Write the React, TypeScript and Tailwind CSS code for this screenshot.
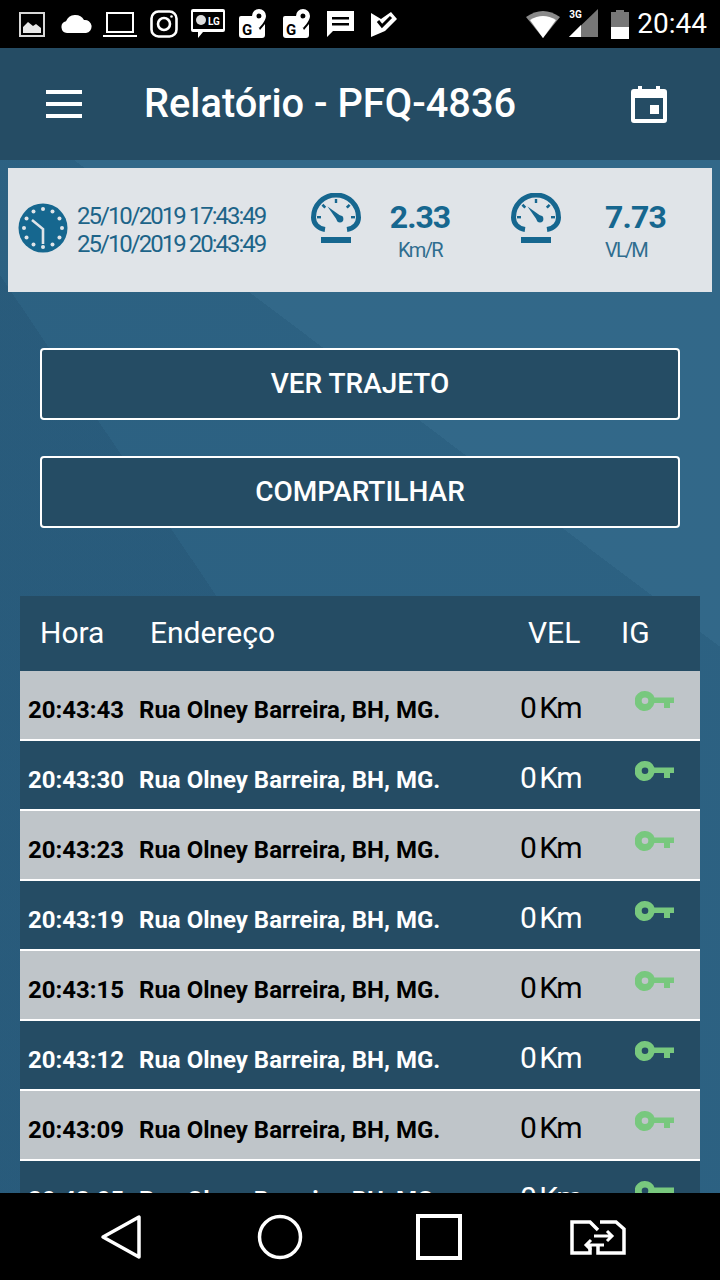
import React from "react";

const rows = ["20:43:43", "20:43:30", "20:43:23", "20:43:19", "20:43:15", "20:43:12", "20:43:09", "20:43:05"];

function Gauge() {
  return (
    <svg width="50" height="50" viewBox="0 0 50 50" className="shrink-0" fill="none">
      <path d="M14 36.5 C 7 35.5 2.5 30.5 2.5 24.5 A 22.5 22.5 0 0 1 47.5 24.5 C 47.5 30.5 43 35.5 36 36.5" stroke="#16678f" strokeWidth="5" />
      <g fill="#16678f">
        <rect x="23.8" y="6" width="2.4" height="4" />
        <rect x="11.5" y="11" width="2.6" height="4" transform="rotate(-45 13 13)" />
        <rect x="36" y="11" width="2.6" height="4" transform="rotate(45 37 13)" />
        <rect x="6" y="23" width="4" height="2.4" />
        <rect x="40" y="23" width="4" height="2.4" />
        <circle cx="29" cy="26" r="3.4" />
        <path d="M16.5 13.5 L30.5 23.5 L27 28.5 Z" />
        <rect x="10" y="44" width="30" height="6" />
      </g>
    </svg>
  );
}

function ClockFace() {
  const dots = Array.from({ length: 12 }, (_, i) => {
    const a = (i * Math.PI) / 6;
    return <circle key={i} cx={25 + 19 * Math.sin(a)} cy={25 - 19 * Math.cos(a)} r="2" fill="#e0e4e8" />;
  });
  return (
    <svg width="50" height="50" viewBox="0 0 50 50" className="shrink-0">
      <circle cx="25" cy="25" r="24.5" fill="#16678f" />
      {dots}
      <path d="M14 17 L25 26 L25 41" fill="none" stroke="#e0e4e8" strokeWidth="2.6" />
    </svg>
  );
}

function Key() {
  return (
    <svg width="40" height="22" viewBox="0 0 40 22" fill="#78c87e">
      <path fillRule="evenodd" d="M10 1 a10 10 0 0 1 9.4 6.5 H39 V13 H35 V18 H29 V13 H19.4 A10 10 0 1 1 10 1 Z M10 7.5 a3.3 3.3 0 1 0 0 6.6 a3.3 3.3 0 0 0 0 -6.6 Z" />
    </svg>
  );
}

function MapIcon({ className }: { className: string }) {
  return (
    <svg width="28" height="30" viewBox="0 0 28 30" className={className}>
      <path d="M2 7 H14 L21 21 L26 15 V26 a3 3 0 0 1 -3 3 H3 a3 3 0 0 1 -3 -3 V9 a2 2 0 0 1 2 -2 Z" fill="#fff" />
      <path fillRule="evenodd" d="M20 0 a7 7 0 0 1 7 7 c0 5 -7 12 -7 12 s-7 -7 -7 -12 a7 7 0 0 1 7 -7 Z M20 4.5 a2.5 2.5 0 1 0 0 5 a2.5 2.5 0 0 0 0 -5 Z" fill="#fff" />
      <text x="3" y="26" fontFamily="Roboto, sans-serif" fontWeight="700" fontSize="15" fill="#000">G</text>
    </svg>
  );
}

function StatusIcons() {
  return (
    <div className="flex items-center">
      <svg width="26" height="26" viewBox="0 0 26 26" className="ml-[19px]" fill="none">
        <rect x="1" y="2" width="24" height="23" stroke="#d8d8d8" strokeWidth="2" />
        <path d="M4 22 V16 L9 11 L14 15 L17 13 L22 17 V22 Z" fill="#e8e8e8" />
      </svg>
      <svg width="32" height="20" viewBox="0 0 32 20" className="ml-[15px]" fill="#fff">
        <path d="M7 19 a6 6 0 0 1 -1 -11.8 A10 10 0 0 1 24 6 a6.5 6.5 0 0 1 2 13 Z" />
      </svg>
      <svg width="34" height="26" viewBox="0 0 34 26" className="ml-[11px]" fill="none" stroke="#fff" strokeWidth="2">
        <rect x="4" y="2" width="26" height="19" />
        <path d="M0 25 H34" />
      </svg>
      <svg width="28" height="28" viewBox="0 0 28 28" className="ml-[13px]" fill="none" stroke="#fff" strokeWidth="2.6">
        <rect x="1.5" y="1.5" width="25" height="25" rx="7" />
        <circle cx="14" cy="14" r="6" />
        <circle cx="21.5" cy="6.5" r="1.3" fill="#fff" stroke="none" />
      </svg>
      <svg width="34" height="30" viewBox="0 0 34 30" className="ml-[13px]">
        <path d="M2 0 H32 a2 2 0 0 1 2 2 V21 a2 2 0 0 1 -2 2 H12 L7 29 V23 H2 a2 2 0 0 1 -2 -2 V2 a2 2 0 0 1 2 -2 Z" fill="#fff" />
        <rect x="2" y="3" width="30" height="17" fill="#000" />
        <circle cx="10" cy="11" r="5" fill="#ddd" />
        <text x="17" y="15.5" fontFamily="Roboto, sans-serif" fontWeight="700" fontSize="10" fill="#fff">LG</text>
      </svg>
      <MapIcon className="ml-[14px]" />
      <MapIcon className="ml-[16px]" />
      <svg width="28" height="28" viewBox="0 0 28 28" className="ml-[15px]">
        <path d="M0 1 H28 V21 H7 L1 27 V1 Z" fill="#fff" />
        <rect x="6" y="7" width="17" height="2.5" fill="#000" />
        <rect x="6" y="13" width="17" height="2.5" fill="#000" />
      </svg>
      <svg width="26" height="26" viewBox="0 0 26 26" className="ml-[17px]">
        <path d="M0 2 L10 8 L20 1 L26 8 L14 20 L0 26 Z" fill="#fff" />
        <path d="M7 10 L11 15 L20 6" fill="none" stroke="#000" strokeWidth="3" />
      </svg>
    </div>
  );
}

function StatusRight() {
  return (
    <div className="flex items-center pr-[13px]">
      <svg width="34" height="30" viewBox="0 0 34 30">
        <path d="M0 8 Q17 -4 34 8 L17 29 Z" fill="#8a8a8a" />
        <path d="M4 11 Q17 3 30 11 L17 29 Z" fill="#fff" />
      </svg>
      <div className="relative ml-[9px] h-[30px] w-[29px]">
        <svg width="29" height="30" viewBox="0 0 29 30" className="absolute left-0 top-0">
          <path d="M29 0 V28 H0 Z" fill="#777" />
          <path d="M12 16 V28 H0 Z" fill="#fff" />
        </svg>
        <span className="absolute left-0 top-0 font-['Roboto',sans-serif] text-[10px] font-bold leading-[12px] text-white">3G</span>
      </div>
      <div className="ml-[13px] flex h-[29px] w-[18px] flex-col items-center">
        <div className="h-[2px] w-[8px] bg-[#777]" />
        <div className="h-[15px] w-full bg-[#777]" />
        <div className="h-[12px] w-full bg-white" />
      </div>
      <span className="ml-[8px] font-['Roboto',sans-serif] text-[28px] leading-none text-white">20:44</span>
    </div>
  );
}

export default function App() {
  return (
    <div className="flex h-[1280px] w-[720px] flex-col overflow-hidden bg-black font-['Roboto',sans-serif]">
      <div className="flex h-[48px] shrink-0 items-center justify-between bg-black">
        <StatusIcons />
        <StatusRight />
      </div>

      <div className="flex h-[112px] shrink-0 items-center bg-[#254c64] pl-[46px] pr-[53px]">
        <div className="flex w-[36px] flex-col gap-[8px]">
          <div className="h-[4px] bg-white" />
          <div className="h-[4px] bg-white" />
          <div className="h-[4px] bg-white" />
        </div>
        <h1 className="ml-[62px] flex-1 whitespace-nowrap text-[39.8px] font-medium leading-none text-white">Relatório - PFQ-4836</h1>
        <svg width="36" height="37" viewBox="0 0 36 37" fill="#fff">
          <path fillRule="evenodd" d="M3 3 H7 V0 H11 V3 H25 V0 H29 V3 H33 a3 3 0 0 1 3 3 V34 a3 3 0 0 1 -3 3 H3 a3 3 0 0 1 -3 -3 V6 a3 3 0 0 1 3 -3 Z M4 12 V33 H32 V12 Z" />
          <rect x="19" y="19" width="9" height="9" />
        </svg>
      </div>

      <div className="flex min-h-0 flex-1 flex-col bg-[#2f6687] bg-[linear-gradient(56deg,rgba(20,55,85,0.14)_0_43.7%,rgba(0,0,0,0)_43.7%),linear-gradient(37deg,rgba(20,55,85,0.1)_0_69.1%,rgba(255,255,255,0.015)_69.1%)]">
        <div className="mx-[8px] mt-[8px] flex h-[124px] shrink-0 items-start bg-[#e0e4e8] pl-[10px] pt-[25px]">
          <div className="mt-[10px]"><ClockFace /></div>
          <div className="ml-[9px] mt-[9px] w-[234px] whitespace-nowrap text-[24px] leading-[28px] tracking-[-2px] text-[#1d6489]">
            <div>25/10/2019 17:43:49</div>
            <div>25/10/2019 20:43:49</div>
          </div>
          <Gauge />
          <div className="ml-[28px] mt-[1px] w-[62px] text-center">
            <div className="text-[32px] font-bold leading-[46px] tracking-[-1px] text-[#16678f]">2.33</div>
            <div className="mt-[-2px] text-[20px] leading-[24px] tracking-[-1.6px] text-[#2f6d8f]">Km/R</div>
          </div>
          <div className="ml-[60px]"><Gauge /></div>
          <div className="ml-[44px] mt-[1px] w-[62px]">
            <div className="text-[32px] font-bold leading-[46px] tracking-[-0.8px] text-[#16678f]">7.73</div>
            <div className="mt-[-2px] text-[20px] leading-[24px] tracking-[-1.8px] text-[#2f6d8f]">VL/M</div>
          </div>
        </div>

        <div className="mx-[40px] mt-[56px] flex flex-col gap-[36px]">
          <button className="h-[72px] rounded-[4px] border-2 border-white bg-[#254c64] text-[28px] font-medium text-white">VER TRAJETO</button>
          <button className="h-[72px] rounded-[4px] border-2 border-white bg-[#254c64] text-[28px] font-medium text-white">COMPARTILHAR</button>
        </div>

        <div className="mx-[20px] mt-[68px] flex min-h-0 flex-1 flex-col overflow-hidden">
          <div className="flex h-[75px] shrink-0 items-center bg-[#254c64] pb-[3px] text-[30px] text-white">
            <span className="ml-[20px] w-[110px]">Hora</span>
            <span className="w-[378px]">Endereço</span>
            <span className="w-[93px]">VEL</span>
            <span>IG</span>
          </div>
          {rows.map((time, i) => {
            const dark = i % 2 === 1;
            return (
              <div
                key={time}
                className={`flex h-[70px] shrink-0 items-center border-b-2 border-white pt-[10px] ${dark ? "bg-[#254c64] text-white" : "bg-[#bfc5c9] text-black"}`}
              >
                <span className="ml-[8px] w-[111px] text-[24px] font-bold">{time}</span>
                <span className="w-[381px] text-[24px] font-bold">Rua Olney Barreira, BH, MG.</span>
                <span className="mb-[5px] w-[115px] text-[30px] tracking-[-1.5px] [word-spacing:-2px]">0 Km</span>
                <div className="mb-[18px]"><Key /></div>
              </div>
            );
          })}
        </div>
      </div>

      <div className="flex h-[87px] shrink-0 items-center bg-black">
        <svg width="42" height="46" viewBox="0 0 42 46" fill="none" stroke="#fff" strokeWidth="3.5" className="ml-[100px]">
          <path d="M39 3 V43 L3 23 Z" strokeLinejoin="round" />
        </svg>
        <svg width="46" height="46" viewBox="0 0 46 46" fill="none" stroke="#fff" strokeWidth="3.5" className="ml-[115px]">
          <circle cx="23" cy="23" r="20.5" />
        </svg>
        <svg width="46" height="46" viewBox="0 0 46 46" fill="none" stroke="#fff" strokeWidth="4" className="ml-[113px]">
          <rect x="2" y="2" width="42" height="42" />
        </svg>
        <svg width="56" height="36" viewBox="0 0 56 36" fill="none" stroke="#fff" strokeWidth="3.5" className="ml-[108px]">
          <path d="M20 26 V34 H2 V3 H20 L28 11" />
          <path d="M28 26 V34 H54 V10 L46 3 H30" />
          <path d="M24 17 H42 M37 12 L42 17 L37 22 M34 26 H16 M21 21 L16 26 L21 31" strokeWidth="3" />
        </svg>
      </div>
    </div>
  );
}
